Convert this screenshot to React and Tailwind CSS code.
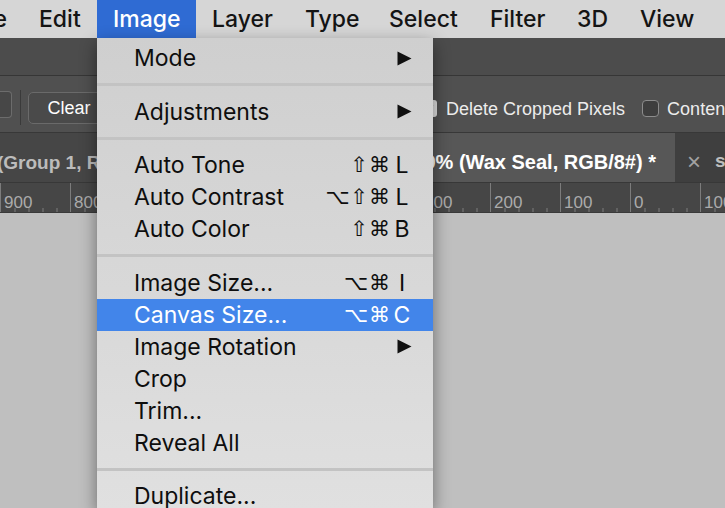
import React from "react";

const menuBarItems = [
  { label: "Edit", w: "w-[74px]" },
  { label: "Image", w: "w-[99px]", active: true },
  { label: "Layer", w: "w-[93px]" },
  { label: "Type", w: "w-[84px]" },
  { label: "Select", w: "w-[101px]" },
  { label: "Filter", w: "w-[87px]" },
  { label: "3D", w: "w-[63px]" },
  { label: "View", w: "w-[101px]" },
];

const menuGroups = [
  [{ label: "Mode", arrow: true }],
  [{ label: "Adjustments", arrow: true }],
  [
    { label: "Auto Tone", mods: "⇧⌘", key: "L" },
    { label: "Auto Contrast", mods: "⌥⇧⌘", key: "L" },
    { label: "Auto Color", mods: "⇧⌘", key: "B" },
  ],
  [
    { label: "Image Size...", mods: "⌥⌘", key: "I" },
    { label: "Canvas Size...", mods: "⌥⌘", key: "C", active: true },
    { label: "Image Rotation", arrow: true },
    { label: "Crop" },
    { label: "Trim..." },
    { label: "Reveal All" },
  ],
  [{ label: "Duplicate..." }, { label: "Apply Image..." }, { label: "Calculations..." }],
];

const rulerLabels = ["900", "800", "700", "600", "500", "400", "300", "200", "100", "0", "100"];

const Arrow = ({ color }) => (
  <svg width="15" height="15" viewBox="0 0 15 15">
    <polygon points="0.5,0.5 14.5,7.5 0.5,14.5" fill={color} />
  </svg>
);

const MenuRow = ({ item }) => {
  const text = item.active ? "text-white" : "text-[#0e0e0e]";
  return (
    <div
      className={`flex h-[32px] items-center pl-[37px] pr-[20px] leading-[32px] ${
        item.active ? "bg-[#4285ea]" : ""
      } ${text}`}
    >
      <span className="flex-1 whitespace-nowrap">{item.label}</span>
      {item.mods && (
        <span className="flex items-center">
          <span className="font-['DejaVu_Sans',sans-serif] text-[21px] tracking-[1px]">{item.mods}</span>
          <span className="w-[22px] text-center">{item.key}</span>
        </span>
      )}
      {item.arrow && (
        <span className="mr-[1px] flex items-center">
          <Arrow color="#101010" />
        </span>
      )}
    </div>
  );
};

const App = () => {
  return (
    <div className="relative h-[508px] w-[725px] overflow-hidden bg-[#bfbfbf] font-['Inter','DejaVu_Sans',sans-serif]">
      {/* Menu bar */}
      <div className="flex h-[38px] items-stretch bg-[#d6d6d6] text-[23px] font-medium text-[#141414]">
        <div className="flex w-[23px] shrink-0 items-center justify-end overflow-hidden pr-4">
          <span className="whitespace-nowrap">File</span>
        </div>
        {menuBarItems.map((m) => (
          <div
            key={m.label}
            className={`flex shrink-0 items-center pl-4 ${m.w} ${m.active ? "bg-[#2f6bd3] text-white" : ""}`}
          >
            {m.label}
          </div>
        ))}
      </div>

      {/* Top strip */}
      <div className="h-[38px] border-b border-[#363636] bg-[#4c4c4c]" />

      {/* Options bar */}
      <div className="flex h-[57px] items-start overflow-hidden border-b border-[#383838] bg-[#505050] font-['Liberation_Sans',sans-serif] text-[18px] text-[#ececec]">
        <div className="mt-[15px] h-[27px] w-[12px] shrink-0 rounded-r-[4px] border border-l-0 border-[#6c6c6c] bg-[#474747]" />
        <div className="ml-[8px] mt-[14px] h-[35px] w-px shrink-0 bg-[#3a3a3a]" />
        <div className="ml-[7px] mt-[16px] flex h-[32px] w-[82px] shrink-0 items-center justify-center rounded-[5px] border border-[#6a6a6a] bg-[#4a4a4a] text-white">
          Clear
        </div>
        <div className="ml-[310px] mt-[24px] flex h-[17px] w-[17px] shrink-0 items-center justify-center rounded-[3px] bg-[#dedede]">
          <svg width="11" height="11" viewBox="0 0 11 11">
            <path d="M1.5 5.5 L4.5 8.5 L9.5 2" stroke="#2a2a2a" strokeWidth="2" fill="none" />
          </svg>
        </div>
        <span className="ml-[9px] mt-[21px] shrink-0 whitespace-nowrap leading-[24px]">Delete Cropped Pixels</span>
        <div className="ml-[17px] mt-[24px] h-[17px] w-[17px] shrink-0 rounded-[4px] border border-[#8c8c8c] bg-[#3e3e3e]" />
        <span className="ml-[8px] mt-[21px] shrink-0 whitespace-nowrap leading-[24px]">Content-Aware</span>
      </div>

      {/* Tab bar */}
      <div className="flex h-[50px] border-b border-[#383838] bg-[#3f3f3f] pt-[8px] font-['Liberation_Sans',sans-serif] text-[19px] font-bold">
        <div className="-mt-[8px] flex w-[300px] shrink-0 items-center overflow-hidden bg-[#464646] pt-[12px] text-[#bcbcbc]">
          <span className="-ml-[3px] whitespace-nowrap">(Group 1, RGB/8) *</span>
        </div>
        <div className="-mt-[8px] flex w-[375px] shrink-0 items-center justify-end overflow-hidden bg-[#575757] pr-[19px] pt-[8px] text-[20px] text-white">
          <span className="whitespace-nowrap">Untitled-1 @ 66.9% (Wax Seal, RGB/8#) *</span>
        </div>
        <div className="flex items-center pl-[12px] text-[#bdbdbd]">
          <span className="text-[24px] font-normal text-[#a2a2a2]">×</span>
          <span className="ml-[14px] whitespace-nowrap">seal.psd</span>
        </div>
      </div>

      {/* Ruler */}
      <div className="flex h-[30px] overflow-hidden border-b border-[#3a3a3a] bg-[#464646] font-['Liberation_Sans',sans-serif] text-[17px] text-[#ababab]">
        {rulerLabels.map((l, i) => (
          <div key={i} className="relative h-full w-[70px] shrink-0 border-l border-[#7c7c7c]">
            <span className="absolute left-[3px] top-[10px] leading-[20px]">{l}</span>
            <svg className="absolute bottom-0 left-0" width="70" height="5" viewBox="0 0 70 5">
              {[14, 28, 42, 56].map((x) => (
                <line key={x} x1={x} y1="1" x2={x} y2="5" stroke="#7c7c7c" strokeWidth="1" />
              ))}
            </svg>
          </div>
        ))}
      </div>

      {/* Image menu dropdown */}
      <div className="absolute bottom-0 left-[97px] top-[38px] w-[336px] bg-gradient-to-b from-[#cfcfcf] to-[#e0e0e0] pt-[4px] text-[23px] shadow-[0_6px_16px_rgba(0,0,0,0.45)]">
        {menuGroups.map((group, gi) => (
          <div key={gi}>
            {gi > 0 && (
              <div className="flex h-[21.5px] items-center">
                <div className="h-[3px] w-full bg-[#c3c3c3]" />
              </div>
            )}
            {group.map((item) => (
              <MenuRow key={item.label} item={item} />
            ))}
          </div>
        ))}
      </div>
    </div>
  );
};

export default App;
